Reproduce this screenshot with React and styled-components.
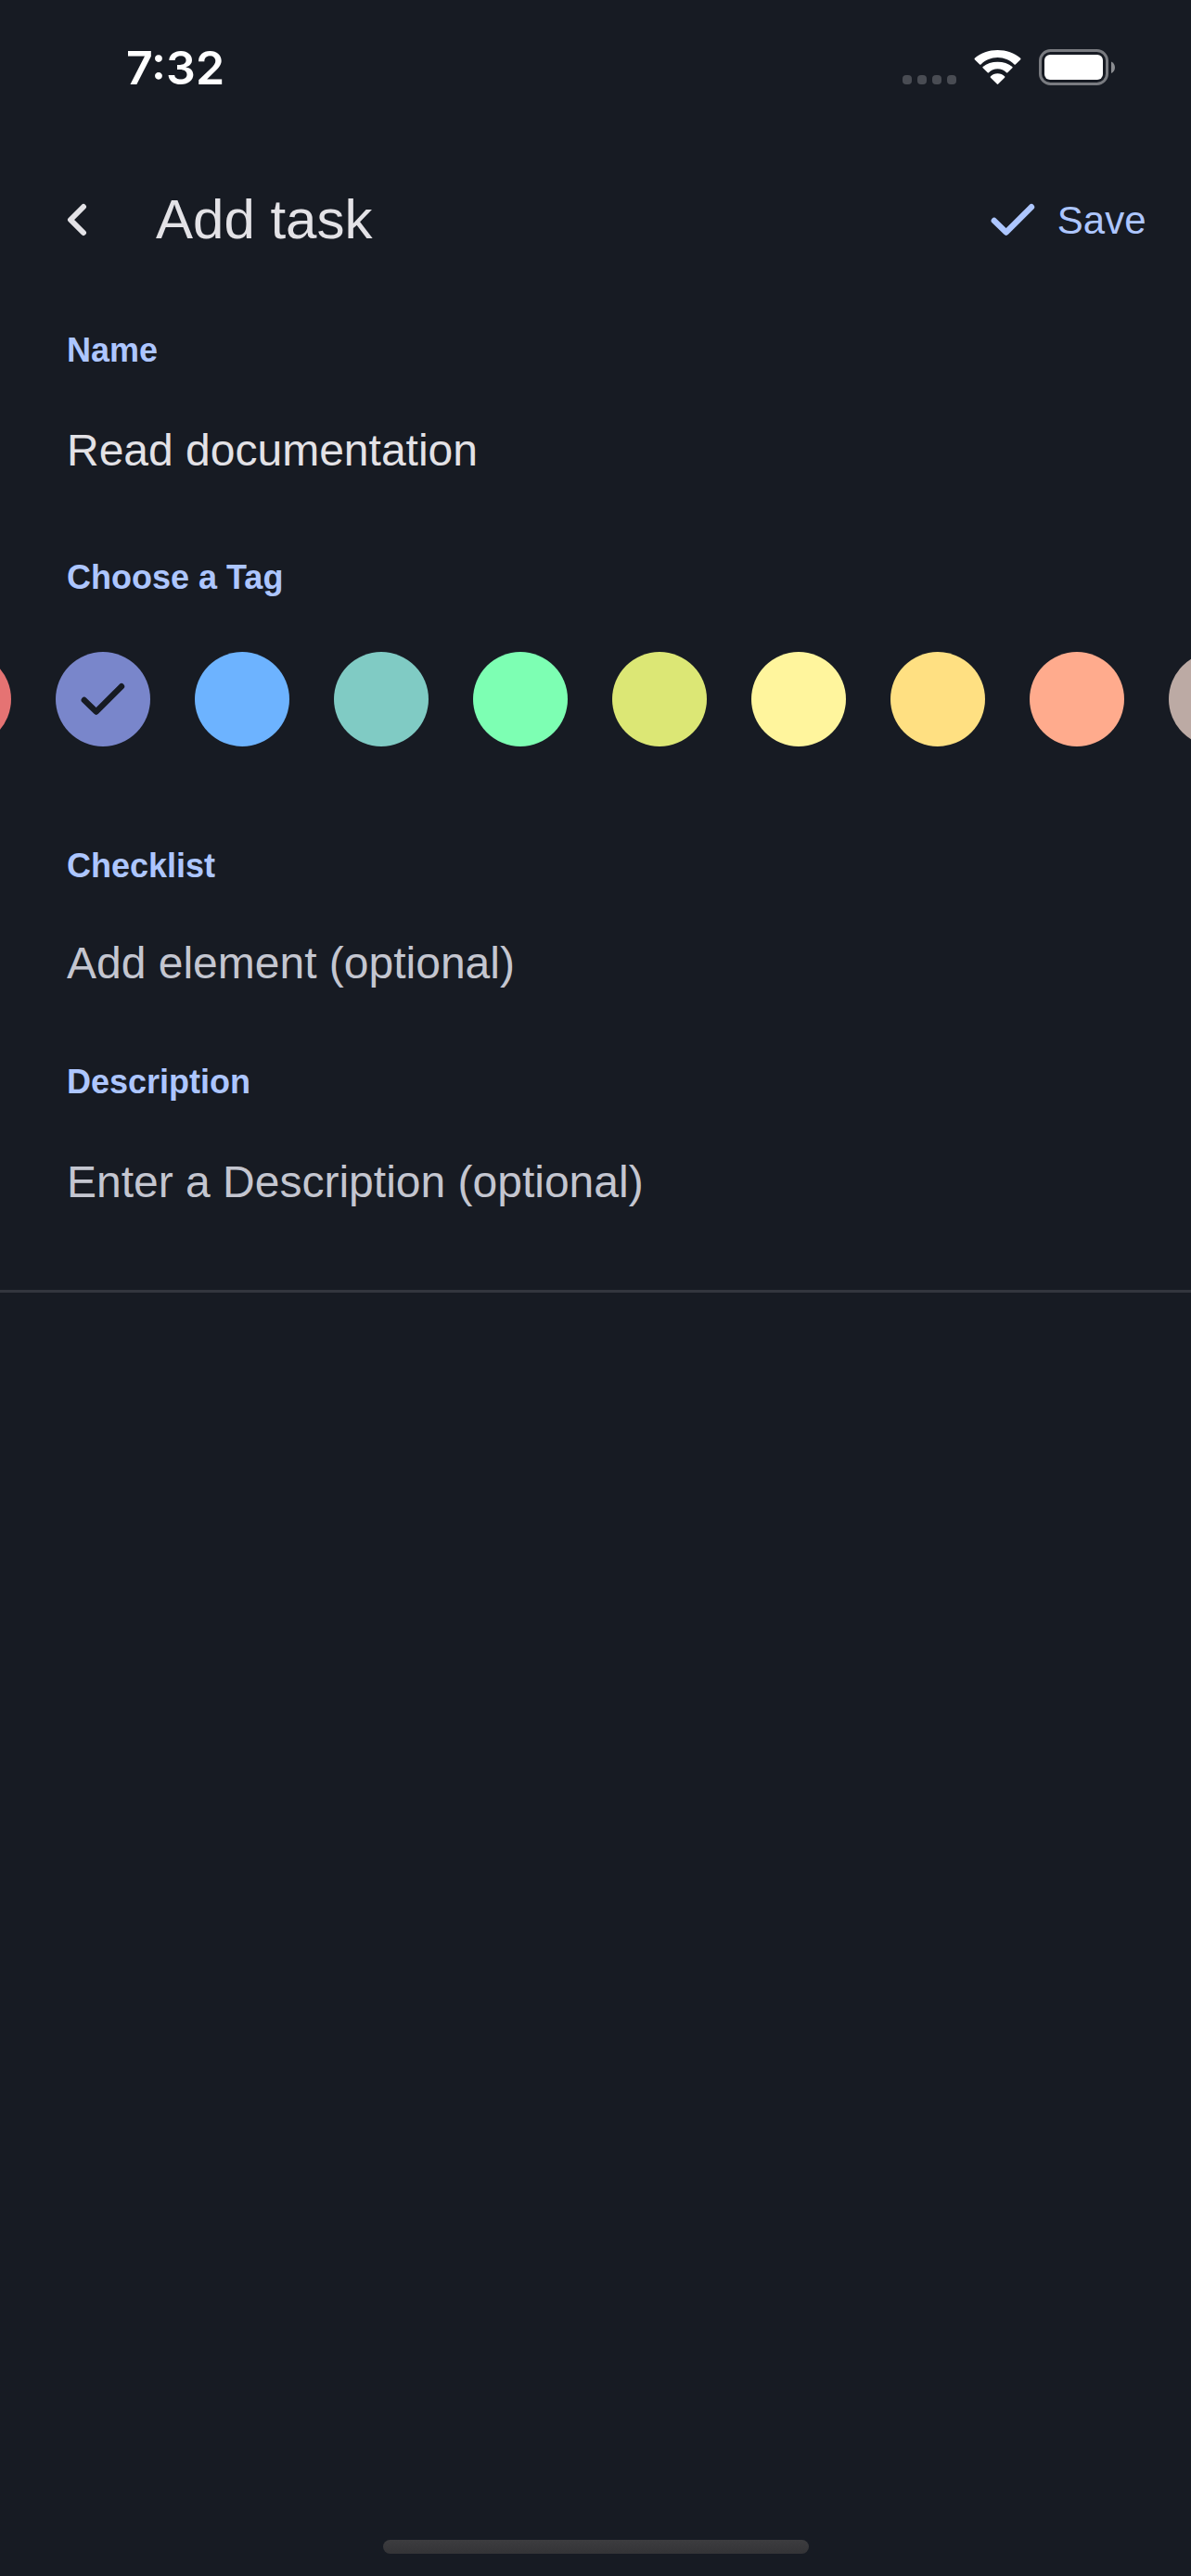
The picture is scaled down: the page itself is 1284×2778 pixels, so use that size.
import React from "react";
import styled, { createGlobalStyle } from "styled-components";

const GlobalStyle = createGlobalStyle`
  *, *::before, *::after { box-sizing: border-box; }
  body { margin: 0; background: #171b23; }
`;

const Screen = styled.div`
  display: flex;
  flex-direction: column;
  width: 1284px;
  height: 2778px;
  overflow: hidden;
  background: #171b23;
  color: #e3e2e6;
  font-family: "Liberation Sans", Arial, sans-serif;
`;

const StatusBar = styled.header`
  display: flex;
  justify-content: space-between;
  align-items: center;
  height: 145px;
  padding: 0 82px 0 136px;
`;

const Clock = styled.time`
  padding-top: 1px;
  font-family: Inter, sans-serif;
  font-size: 50px;
  font-weight: 600;
  line-height: 60px;
  letter-spacing: 0;
  color: #fff;
`;

const Indicators = styled.div`
  display: flex;
  align-items: flex-end;
  height: 39px;
`;

const SignalDots = styled.div`
  display: flex;
  gap: 6px;
  margin: 0 19px 1px 0;
`;

const Dot = styled.span`
  width: 10px;
  height: 10px;
  border-radius: 4px;
  background: #494c53;
`;

const WifiIcon = styled.svg`
  width: 51px;
  height: 38px;
  margin-right: 19px;
`;

const BatteryIcon = styled.svg`
  width: 82px;
  height: 39px;
`;

const TopBar = styled.div`
  display: flex;
  align-items: center;
  height: 183px;
  padding: 0 48.500px 0 72px;
`;

const BackIcon = styled.svg`
  width: 22px;
  height: 36px;
  margin-right: 74px;
`;

const Title = styled.h1`
  margin: 0;
  flex: 1;
  font-size: 60px;
  font-weight: 400;
  line-height: 72px;
`;

const SaveButton = styled.button`
  display: flex;
  align-items: center;
  gap: 23.5px;
  padding: 0;
  border: 0;
  background: none;
  color: #adc6ff;
  font: 400 42px/48px "Liberation Sans", Arial, sans-serif;
`;

const SaveLabel = styled.span`
  padding-top: 2px;
`;

const CheckMark = styled.svg`
  width: 48px;
  height: 36px;
`;

const Section = styled.section`
  height: ${(p) => p.$height}px;
  padding-top: 29px;
`;

const Label = styled.h2`
  margin: 0;
  padding-left: 72px;
  font-size: 36px;
  font-weight: 700;
  line-height: 42px;
  color: #adc6ff;
`;

const FieldText = styled.p`
  margin: ${(p) => p.$gap}px 0 0;
  padding-left: 72px;
  font-size: 48px;
  line-height: 56px;
  color: ${(p) => (p.$placeholder ? "#c4c6d0" : "#e3e2e6")};
`;

const TagRow = styled.div`
  display: flex;
  gap: 48px;
  margin: 59px 0 0 -90px;
`;

const Tag = styled.div`
  display: flex;
  flex: none;
  align-items: center;
  justify-content: center;
  width: 102px;
  height: 102px;
  border-radius: 50%;
  background: ${(p) => p.$color};
  color: #171b23;
`;

const Divider = styled.hr`
  width: 100%;
  height: 3px;
  margin: 0;
  border: 0;
  background: #33363e;
`;

const HomeIndicator = styled.div`
  width: 459px;
  height: 15px;
  margin: auto 0 24px 413px;
  border-radius: 8px;
  background: linear-gradient(#3c3c3f, #343437);
`;

const TAGS = [
  "#e57373", "#7986cb", "#6db3ff", "#80cbc4", "#7dffb3", "#dce775",
  "#fff59d", "#ffe082", "#ffab8d", "#bcaaa4",
];

function Check() {
  return (
    <CheckMark viewBox="0 0 48 36" fill="none">
      <path d="M3.8 19 16.7 31.5 44 4.2" stroke="currentColor" strokeWidth="6.4" strokeLinecap="round" strokeLinejoin="round" />
    </CheckMark>
  );
}

export default function App() {
  return (
    <Screen>
      <GlobalStyle />
      <StatusBar>
        <Clock>7:32</Clock>
        <Indicators>
          <SignalDots><Dot /><Dot /><Dot /><Dot /></SignalDots>
          <WifiIcon viewBox="0 0 51 38" fill="#fff">
            <path d="M25.5 7.9c7 0 13.3 2.8 18 7.5.4.4.9.4 1.3 0l5.400-5.200c.4-.4.4-1 0-1.400C43.700 3.100 34.800 0 25.500 0S7.300 3.100.8 8.800c-.4.4-.4 1 0 1.400l5.400 5.200c.4.4.9.4 1.300 0 4.700-4.700 11-7.500 18-7.500z" />
            <path d="M25.5 20.3c3.7 0 7 1.500 9.500 3.900.4.4.9.4 1.300 0l5.100-4.900c.4-.4.4-1 0-1.400-4.200-3.300-9.800-5.200-15.900-5.200s-11.700 1.900-15.900 5.200c-.4.4-.4 1 0 1.400l5.100 4.900c.4.4.9.4 1.300 0 2.500-2.400 5.800-3.900 9.500-3.900z" />
            <path d="M33 28.300c.5.4.5 1 .1 1.400l-6.900 6.900c-.4.4-1 .4-1.400 0l-6.900-6.900c-.4-.4-.4-1 .1-1.400 1.900-2 4.500-3.100 7.500-3.100s5.600 1.100 7.500 3.100z" />
          </WifiIcon>
          <BatteryIcon viewBox="0 0 82 39">
            <rect x="1.5" y="1.5" width="72" height="36" rx="11" fill="none" stroke="#797b80" strokeWidth="3" />
            <rect x="6" y="6" width="63" height="27" rx="6" fill="#fff" />
            <path d="M78 13.5v12.5c2.5-1 4-3.5 4-6.25s-1.5-5.25-4-6.25z" fill="#8b8d91" />
          </BatteryIcon>
        </Indicators>
      </StatusBar>

      <TopBar>
        <BackIcon viewBox="0 0 22 36" fill="none">
          <path d="M18 4 4 18l14 14" stroke="currentColor" strokeWidth="6" strokeLinecap="round" strokeLinejoin="round" />
        </BackIcon>
        <Title>Add task</Title>
        <SaveButton><Check /><SaveLabel>Save</SaveLabel></SaveButton>
      </TopBar>

      <Section $height={245}>
        <Label>Name</Label>
        <FieldText $gap={59}>Read documentation</FieldText>
      </Section>
      <Section $height={311}>
        <Label>Choose a Tag</Label>
        <TagRow>
          {TAGS.map((color, i) => (
            <Tag key={color} $color={color}>{i === 1 && <Check />}</Tag>
          ))}
        </TagRow>
      </Section>
      <Section $height={233}>
        <Label>Checklist</Label>
        <FieldText $gap={56} $placeholder>Add element (optional)</FieldText>
      </Section>
      <Section $height={274}>
        <Label>Description</Label>
        <FieldText $gap={59} $placeholder>Enter a Description (optional)</FieldText>
      </Section>
      <Divider />
      <HomeIndicator />
    </Screen>
  );
}
